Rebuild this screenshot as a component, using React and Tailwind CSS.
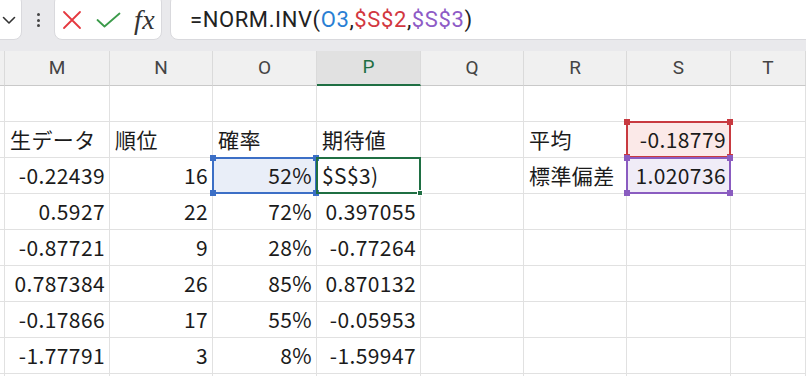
import React from "react";

const CELL_FONT = { fontFamily: '"Noto Sans CJK JP", "Noto Sans", sans-serif' };
const UI_FONT = { fontFamily: 'Roboto, "Noto Sans", sans-serif' };

const cols = ["M", "N", "O", "P", "Q", "R", "S", "T"];

// [M, N, O, P, Q, R, S, T] ; "l:" prefix = left aligned text
const rows = [
  ["", "", "", "", "", "", "", ""],
  ["l:生データ", "l:順位", "l:確率", "l:期待値", "", "l:平均", "-0.18779", ""],
  ["-0.22439", "16", "52%", "l:$S$3)", "", "l:標準偏差", "1.020736", ""],
  ["0.5927", "22", "72%", "0.397055", "", "", "", ""],
  ["-0.87721", "9", "28%", "-0.77264", "", "", "", ""],
  ["0.787384", "26", "85%", "0.870132", "", "", "", ""],
  ["-0.17866", "17", "55%", "-0.05953", "", "", "", ""],
  ["-1.77791", "3", "8%", "-1.59947", "", "", "", ""],
  ["", "", "", "", "", "", "", ""],
];

const Handle = ({ className }) => <span className={`absolute h-[6px] w-[6px] ${className}`} />;

function RefBox({ border, fill, handle }) {
  return (
    <div className={`absolute -inset-[1px] z-10 border-2 ${border} ${fill}`}>
      <Handle className={`-left-[4px] -top-[4px] ${handle}`} />
      <Handle className={`-right-[4px] -top-[4px] ${handle}`} />
      <Handle className={`-left-[4px] -bottom-[4px] ${handle}`} />
      <Handle className={`-right-[4px] -bottom-[4px] ${handle}`} />
    </div>
  );
}

function overlayFor(r, c) {
  if (r === 2 && c === 2)
    return <RefBox border="border-[#3c6fc6]" fill="bg-[#e9eef8]" handle="bg-[#3c6fc6]" />;
  if (r === 1 && c === 6)
    return <RefBox border="border-[#c83a40]" fill="bg-[#fbe9e8]" handle="bg-[#c83a40]" />;
  if (r === 2 && c === 6)
    return <RefBox border="border-[#8a5cc0]" fill="bg-[#f0ecf7]" handle="bg-[#8a5cc0]" />;
  if (r === 2 && c === 3)
    return (
      <div className="absolute -inset-[1px] z-20 border-2 border-[#1f6f43]">
        <span className="absolute -bottom-[4px] -right-[4px] h-[6px] w-[6px] border border-white bg-[#1f6f43]" />
      </div>
    );
  return null;
}

function Toolbar() {
  return (
    <div className="flex h-[51px] bg-[#e9e9ec] pb-[11px]">
      {/* name box */}
      <div className="-ml-[10px] -mt-[6px] flex w-[32px] items-center justify-end rounded-lg border border-[#d9d9dd] bg-white pr-[5px] pt-[6px]">
        <svg width="14" height="9" viewBox="0 0 14 9" fill="none">
          <path d="M1.5 1.5 L7 7 L12.5 1.5" stroke="#333" strokeWidth="1.6" strokeLinecap="round" strokeLinejoin="round" />
        </svg>
      </div>
      <div className="flex w-[32px] flex-col items-center justify-center gap-[2.5px]">
        <span className="h-[3px] w-[3px] rounded-full bg-[#444]" />
        <span className="h-[3px] w-[3px] rounded-full bg-[#444]" />
        <span className="h-[3px] w-[3px] rounded-full bg-[#444]" />
      </div>
      {/* cancel / enter / fx */}
      <div className="-mt-[6px] flex w-[108px] items-center rounded-lg border border-[#d9d9dd] bg-white pt-[6px]">
        <svg className="ml-[7px]" width="20" height="20" viewBox="0 0 20 20" fill="none">
          <path d="M2 2 L18 18 M18 2 L2 18" stroke="#e5383f" strokeWidth="1.8" strokeLinecap="round" />
        </svg>
        <svg className="ml-[14px]" width="25" height="16" viewBox="0 0 25 16" fill="none">
          <path d="M1.5 8 L8.5 14.5 L23.5 1.5" stroke="#3b9b4a" strokeWidth="1.8" strokeLinecap="round" strokeLinejoin="round" />
        </svg>
        <span
          className="ml-[13px] text-[28px] italic leading-none tracking-[0.5px] text-[#333]"
          style={{ fontFamily: '"Liberation Serif", "DejaVu Serif", serif' }}
        >
          fx
        </span>
      </div>
      {/* formula */}
      <div className="-mr-[10px] -mt-[6px] ml-[8px] flex flex-1 items-center rounded-lg border border-[#d9d9dd] bg-white pl-[19px] pt-[6px]">
        <span className="text-[22px] leading-none tracking-[0.6px] text-[#222]" style={UI_FONT}>
          =NORM.INV(<span className="text-[#2a7fd4]">O3</span>,
          <span className="text-[#d2373f]">$S$2</span>,
          <span className="text-[#8e5bc6]">$S$3</span>)
        </span>
      </div>
    </div>
  );
}

export default function App() {
  return (
    <div className="h-[376px] w-[806px] overflow-hidden bg-white">
      <Toolbar />
      <div className="grid grid-cols-[5px_105px_103px_104px_104px_103px_103px_104px_1fr]">
        {/* column headers */}
        <div className="h-[35px] border-b border-r border-[#c9c9c9] border-r-[#dadada] bg-[#f0f0f0]" />
        {cols.map((c) => (
          <div
            key={c}
            className={`flex h-[35px] items-center justify-center border-r border-[#dadada] text-[19px] ${
              c === "P"
                ? "border-b-2 border-b-[#1f6f43] bg-[#e1e1e1] text-[#1f6f43]"
                : "border-b border-b-[#c9c9c9] bg-[#f0f0f0] text-[#444]"
            }`}
            style={UI_FONT}
          >
            {c}
          </div>
        ))}

        {/* cells */}
        {rows.map((row, r) => (
          <React.Fragment key={r}>
            <div className="h-[36px] border-b border-r border-[#e1e1e1] bg-white" />
            {row.map((v, c) => {
              const left = v.startsWith("l:");
              const text = left ? v.slice(2) : v;
              return (
                <div
                  key={c}
                  className={`relative flex h-[36px] items-center border-b border-r border-[#e1e1e1] text-[21px] tracking-[0.4px] text-[#1b1b1b] ${
                    left ? "justify-start pl-[5px]" : "justify-end pr-[4px]"
                  }`}
                  style={CELL_FONT}
                >
                  {overlayFor(r, c)}
                  <span className="relative z-30 whitespace-nowrap leading-none">{text}</span>
                </div>
              );
            })}
          </React.Fragment>
        ))}
      </div>
    </div>
  );
}
